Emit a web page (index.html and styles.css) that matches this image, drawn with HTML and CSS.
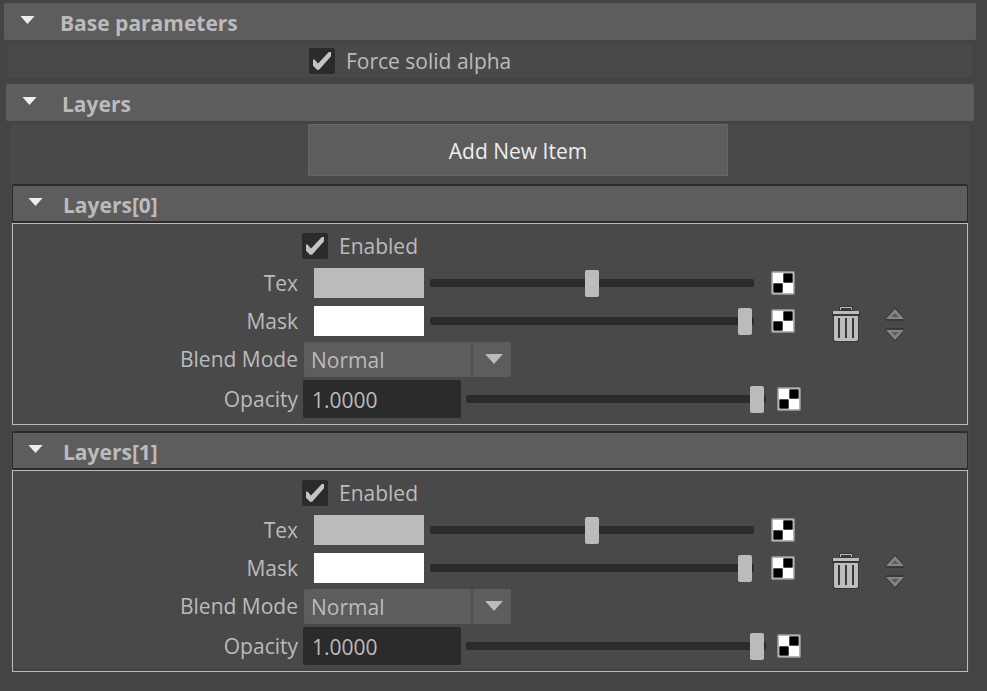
FILE: index.html
```
<!DOCTYPE html>
<html lang="en">
<head>
<meta charset="UTF-8" />
<meta name="viewport" content="width=device-width, initial-scale=1" />
<title>Layers</title>
<link rel="stylesheet" href="styles.css">
</head>
<body>
<!-- shared icons -->
<svg class="sprite" aria-hidden="true">
  <symbol id="arrow" viewBox="0 0 16 9"><path d="M0 0h16L8 9z" /></symbol>
  <symbol id="checker" viewBox="0 0 24 24">
    <rect width="24" height="24" rx="2" fill="#8c8c8c" />
    <rect x="1" y="1" width="22" height="22" rx="1" fill="#b4b4b4" />
    <path d="M2 2h10v10H2zM12 12h10v10H12z" fill="#fff" />
    <path d="M12 2h10v10H12zM2 12h10v10H2z" fill="#999" />
    <path d="M13 3h8v8h-8zM3 13h8v8H3z" fill="#000" stroke="#000" />
  </symbol>
  <symbol id="trash" viewBox="0 0 28 36">
    <path d="M7 5V1q0-1 1-1h12q1 0 1 1v4h6q1 0 1 1v4h-1v24q0 2-2 2H3q-2 0-2-2V10H0V6q0-1 1-1z" fill="#383838" />
    <path d="M8.500 4V1.500h11V4" fill="none" stroke="#bdbdbd" />
    <path d="M1 5h26v3H1z" fill="#bdbdbd" />
    <path d="M2 10h24v23q0 2-2 2H4q-2 0-2-2z" fill="#bdbdbd" />
    <path d="M7 12v20M14 12v20M21 12v20" stroke="#3a3a3a" stroke-width="2" />
  </symbol>
  <symbol id="up" viewBox="0 0 20 14">
    <path d="M10 0L0 12l1 2h18l1-2z" fill="#3a3a3a" />
    <path d="M10 2L1 12h18z" fill="#848484" />
    <path d="M10 6l-4 4h8z" fill="#5c5c5c" />
  </symbol>
  <symbol id="down" viewBox="0 0 20 14">
    <path d="M10 14L0 2l1-2h18l1 2z" fill="#3a3a3a" />
    <path d="M10 12L1 2h18z" fill="#848484" />
    <path d="M10 8L6 4h8z" fill="#5c5c5c" />
  </symbol>
</svg>

<details class="section base" open>
  <summary><svg class="arrow"><use href="#arrow" /></svg>Base parameters</summary>
  <div class="panel">
    <label class="check"><input type="checkbox" checked />Force solid alpha</label>
  </div>
</details>

<details class="section layers" open>
  <summary><svg class="arrow"><use href="#arrow" /></svg>Layers</summary>
  <div class="panel">
    <button type="button" class="add">Add New Item</button>

    <details class="layer" open>
      <summary><svg class="arrow"><use href="#arrow" /></svg>Layers[0]</summary>
      <div class="layer-body">
        <div class="fields">
          <div class="row enabled">
            <label class="check"><input type="checkbox" checked />Enabled</label>
          </div>
          <div class="row color">
            <label for="tex0">Tex</label>
            <input type="color" id="tex0" value="#bbbbbb" />
            <input type="range" aria-label="Tex value" max="1000" value="500" />
            <button type="button" class="map" aria-label="Map tex"><svg><use href="#checker" /></svg></button>
          </div>
          <div class="row color">
            <label for="mask0">Mask</label>
            <input type="color" id="mask0" value="#ffffff" />
            <input type="range" aria-label="Mask value" max="1000" value="993" />
            <button type="button" class="map" aria-label="Map mask"><svg><use href="#checker" /></svg></button>
          </div>
          <div class="row">
            <label for="blend0">Blend Mode</label>
            <div class="select">
              <select id="blend0"><option>Normal</option></select>
              <svg><use href="#arrow" /></svg>
            </div>
          </div>
          <div class="row opacity">
            <label for="opacity0">Opacity</label>
            <input type="text" id="opacity0" value="1.0000" />
            <input type="range" aria-label="Opacity value" max="1000" value="993" />
            <button type="button" class="map" aria-label="Map opacity"><svg><use href="#checker" /></svg></button>
          </div>
        </div>
        <div class="actions">
          <button type="button" class="delete" aria-label="Delete layer"><svg><use href="#trash" /></svg></button>
          <div class="move">
            <button type="button" aria-label="Move up"><svg><use href="#up" /></svg></button>
            <button type="button" aria-label="Move down"><svg><use href="#down" /></svg></button>
          </div>
        </div>
      </div>
    </details>

    <details class="layer" open>
      <summary><svg class="arrow"><use href="#arrow" /></svg>Layers[1]</summary>
      <div class="layer-body">
        <div class="fields">
          <div class="row enabled">
            <label class="check"><input type="checkbox" checked />Enabled</label>
          </div>
          <div class="row color">
            <label for="tex1">Tex</label>
            <input type="color" id="tex1" value="#bbbbbb" />
            <input type="range" aria-label="Tex value" max="1000" value="500" />
            <button type="button" class="map" aria-label="Map tex"><svg><use href="#checker" /></svg></button>
          </div>
          <div class="row color">
            <label for="mask1">Mask</label>
            <input type="color" id="mask1" value="#ffffff" />
            <input type="range" aria-label="Mask value" max="1000" value="993" />
            <button type="button" class="map" aria-label="Map mask"><svg><use href="#checker" /></svg></button>
          </div>
          <div class="row">
            <label for="blend1">Blend Mode</label>
            <div class="select">
              <select id="blend1"><option>Normal</option></select>
              <svg><use href="#arrow" /></svg>
            </div>
          </div>
          <div class="row opacity">
            <label for="opacity1">Opacity</label>
            <input type="text" id="opacity1" value="1.0000" />
            <input type="range" aria-label="Opacity value" max="1000" value="993" />
            <button type="button" class="map" aria-label="Map opacity"><svg><use href="#checker" /></svg></button>
          </div>
        </div>
        <div class="actions">
          <button type="button" class="delete" aria-label="Delete layer"><svg><use href="#trash" /></svg></button>
          <div class="move">
            <button type="button" aria-label="Move up"><svg><use href="#up" /></svg></button>
            <button type="button" aria-label="Move down"><svg><use href="#down" /></svg></button>
          </div>
        </div>
      </div>
    </details>
  </div>
</details>
</body>
</html>
```

FILE: styles.css
```
* { box-sizing: border-box; }
body {
  margin: 0; padding: 3px 11px 0 4px;
  background: #444; color: #bbb;
  font-family: "Open Sans", "Noto Sans", sans-serif; font-size: 21px; line-height: 28px;
}
button, input, select { margin: 0; padding: 0; border: none; background: none; color: inherit; font: inherit; }
svg { display: block; }
.sprite { display: none; }

/* section headers */
summary {
  display: flex; align-items: center; height: 37px; padding: 3px 0 0 16px;
  background: #5d5d5d; border-radius: 2px; font-weight: bold; list-style: none; cursor: pointer;
}
.arrow { width: 15px; height: 8px; margin: 0 25px 7px 0; fill: #eee; }
.panel { background: #494949; }
.base .panel { margin: 5px 4px 7px; padding: 2px 0 2px 301px; }
.layers { margin: 0 2px; }
.layers .panel {
  margin: 5px 4px 0; padding: 0 2px;
  background: linear-gradient(#494949, #494949) 0 0 / 100% calc(100% - 4px) no-repeat;
}

.check { display: flex; align-items: center; gap: 11px; }
input[type="checkbox"] {
  appearance: none; width: 26px; height: 26px; background: #2b2b2b; border-radius: 2px;
  display: grid; place-items: center;
}
input[type="checkbox"]:checked::before {
  content: ""; width: 18px; height: 18px; background: #c4c4c4;
  clip-path: polygon(0 42%, 8% 42%, 28% 64%, 88% 0, 100% 0, 100% 24%, 34% 98%, 22% 98%, 0 76%);
}

.add {
  display: block; width: 420px; max-width: 100%; height: 52px; margin: -2px 0 8px 296px; padding-top: 2px;
  background: #5d5d5d; border: 1px solid #666; color: #eee;
}

/* one layer */
.layer { margin-bottom: 6px; }
.layer:last-child { margin-bottom: 0; }
.layer > summary { height: 39px; padding-left: 15px; border: 1px solid #2b2b2b; border-width: 2px 1px; }
.layer .arrow { margin-right: 20px; }
.layer-body {
  display: grid; grid-template-columns: 1fr 166px;
  padding: 4px 0; border: 1px solid #bbb;
}
.row { display: flex; align-items: center; height: 38px; }
.row > label { flex: none; width: 285px; text-align: right; }
.enabled { height: 36px; }
.enabled > label { width: auto; padding-left: 289px; }
.color { padding-right: 6px; }
.opacity { height: 42px; }

input[type="color"] { appearance: none; width: 110px; height: 30px; margin: 0 6px 0 16px; }
input[type="color"]::-webkit-color-swatch-wrapper { padding: 0; }
input[type="color"]::-webkit-color-swatch { border: none; border-radius: 0; }
input[type="text"] {
  width: 158px; height: 38px; margin: 0 5px; padding: 2px 9px 0;
  background: #2b2b2b; border-radius: 2px;
}

input[type="range"] { appearance: none; flex: 1; min-width: 0; height: 28px; }
input[type="range"]::-webkit-slider-runnable-track { height: 8px; background: #2b2b2b; border-radius: 2px; }
input[type="range"]::-webkit-slider-thumb {
  appearance: none; width: 14px; height: 27px; margin-top: -9px; background: #bbb; border-radius: 2px;
}
.map { margin-left: 17px; }
.map svg { width: 24px; height: 24px; }
.opacity .map { margin-left: 11px; }

.select { display: grid; width: 207px; height: 35px; margin-left: 6px; }
.select > * { grid-area: 1 / 1; }
.select select {
  appearance: none; padding: 2px 40px 0 7px; border-radius: 2px;
  background: linear-gradient(#515151, #515151) 167px 0 / 2px 100% no-repeat #5d5d5d;
}
.select svg { width: 18px; height: 10px; margin-right: 8px; place-self: center end; fill: #bbb; pointer-events: none; }

.actions { display: flex; align-items: center; gap: 25px; padding-left: 31px; }
.delete svg { width: 28px; height: 36px; }
.move { display: grid; gap: 7px; }
.move svg { width: 20px; height: 14px; }
```
